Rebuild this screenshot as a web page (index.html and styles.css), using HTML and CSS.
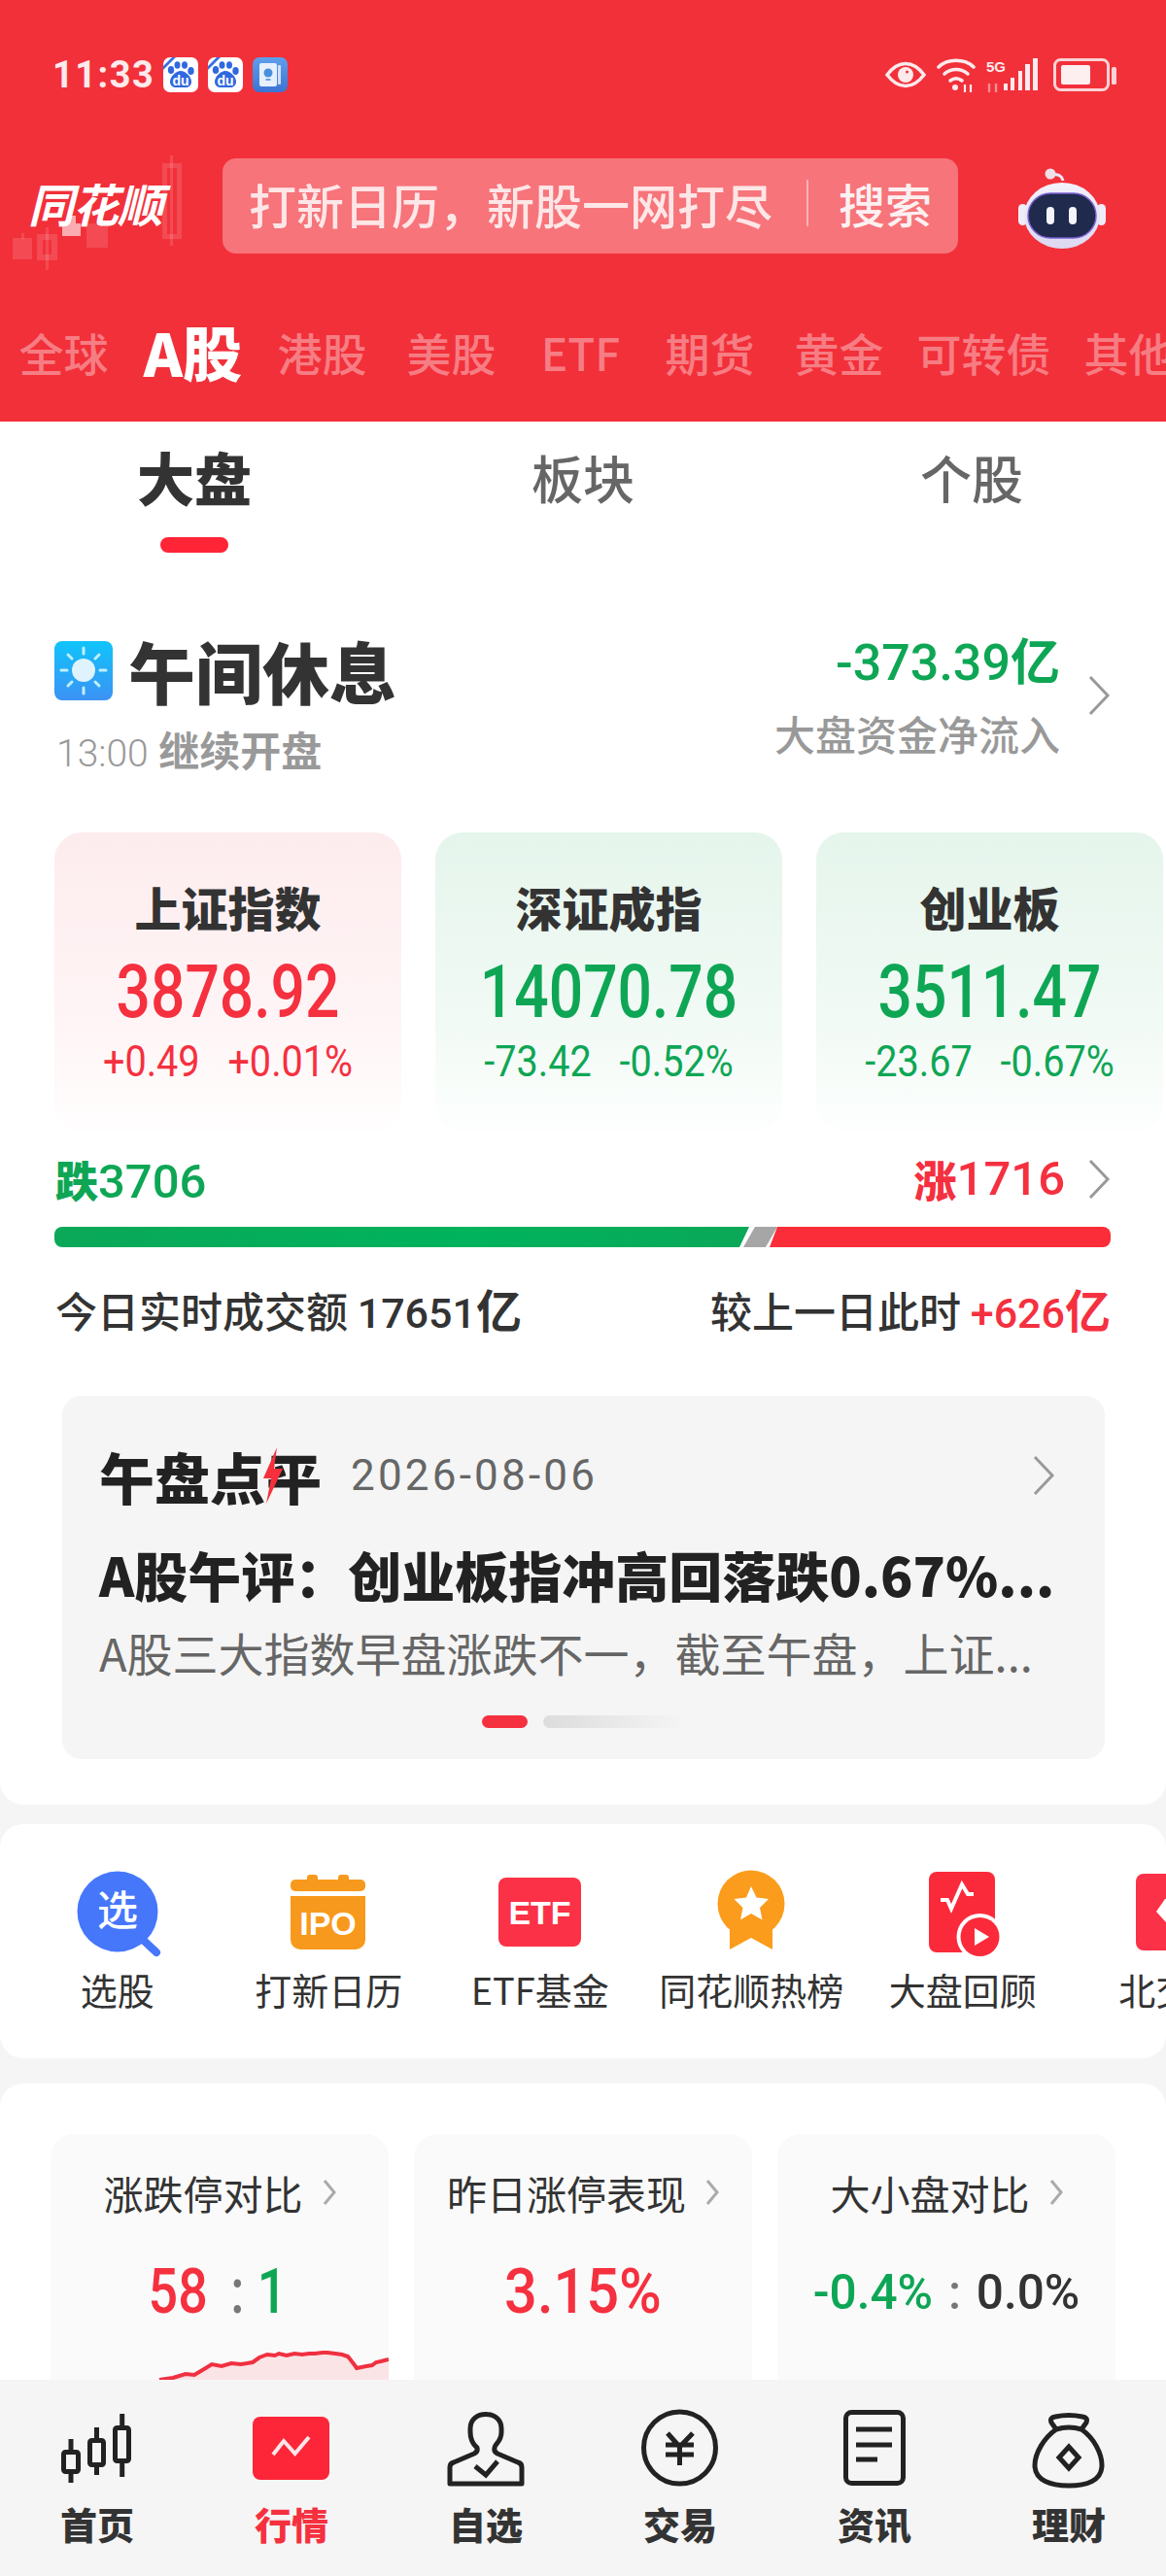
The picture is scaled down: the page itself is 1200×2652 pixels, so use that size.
FILE: index.html
```html
<!DOCTYPE html>
<html lang="zh-CN">
<head>
    <meta charset="UTF-8">
    <meta name="viewport" content="width=device-width, initial-scale=1.0">
    <title>行情</title>
    <link rel="stylesheet" href="styles.css">
</head>
<body>
<div class="app">
    <header class="top">
        <div class="status">
            <span class="clock">11:33</span>
            <svg class="app-ico" viewBox="0 0 36 36">
                <rect width="36" height="36" rx="7" fill="#fff"/>
                <path d="M0 9 9 0h4L0 13z" fill="#3a6fe0"/>
                <ellipse cx="8" cy="13" rx="3.2" ry="4" fill="#3068e0"/>
                <ellipse cx="14.5" cy="8" rx="3" ry="3.8" fill="#3068e0"/>
                <ellipse cx="22" cy="8" rx="3" ry="3.8" fill="#3068e0"/>
                <ellipse cx="28.5" cy="14" rx="3.2" ry="4" fill="#3068e0"/>
                <path d="M18 14c5 0 11 6 11 11 0 4-3 6-6 6H13c-3 0-6-2-6-6 0-5 6-11 11-11z" fill="#3068e0"/>
                <text x="18" y="29" text-anchor="middle" class="du">du</text>
            </svg>
            <svg class="app-ico" viewBox="0 0 36 36">
                <rect width="36" height="36" rx="7" fill="#fff"/>
                <path d="M0 9 9 0h4L0 13z" fill="#3a6fe0"/>
                <ellipse cx="8" cy="13" rx="3.2" ry="4" fill="#3068e0"/>
                <ellipse cx="14.5" cy="8" rx="3" ry="3.8" fill="#3068e0"/>
                <ellipse cx="22" cy="8" rx="3" ry="3.8" fill="#3068e0"/>
                <ellipse cx="28.5" cy="14" rx="3.2" ry="4" fill="#3068e0"/>
                <path d="M18 14c5 0 11 6 11 11 0 4-3 6-6 6H13c-3 0-6-2-6-6 0-5 6-11 11-11z" fill="#3068e0"/>
                <text x="18" y="29" text-anchor="middle" class="du">du</text>
            </svg>
            <svg class="app-ico" viewBox="0 0 36 36">
                <defs>
                    <linearGradient id="noteBg" x1="0" y1="0" x2="0" y2="1">
                        <stop offset="0" stop-color="#5f9fec"/>
                        <stop offset="1" stop-color="#3b73d3"/>
                    </linearGradient>
                </defs>
                <rect width="36" height="36" rx="7" fill="url(#noteBg)"/>
                <rect x="7" y="6" width="18" height="24" rx="2" fill="#e6f0fc"/>
                <rect x="26" y="8" width="3" height="20" rx="1" fill="#cfe0f7"/>
                <circle cx="16" cy="16" r="4.5" fill="#4a8fdc"/>
                <path d="M13.5 23h5" stroke="#4a8fdc" stroke-width="1.6"/>
            </svg>
            <div class="status-right">
                <svg width="42" height="28" viewBox="0 0 42 28" class="ico-eye">
                    <path d="M2 14C8 6 14 2.500 21 2.500S34 6 40 14c-6 8-12 11.500-19 11.500S8 22 2 14z" fill="none" stroke="#fdeaec" stroke-width="3.500"/>
                    <circle cx="21" cy="14" r="8" fill="#fdeaec"/>
                    <circle cx="22.500" cy="11" r="1.500" fill="#f2303a"/>
                </svg>
                <svg width="40" height="36" viewBox="0 0 40 36">
                    <g fill="none" stroke="#fdeaec" stroke-width="3.600" stroke-linecap="round">
                        <path d="M2 10C11 1 29 1 38 10"/>
                        <path d="M8 17c7-6 17-6 24 0"/>
                        <path d="M14 24c4-3 8-3 12 0"/>
                    </g>
                    <circle cx="19" cy="31" r="3" fill="#fdeaec"/>
                    <path d="M29 36v-8M35 28v8" stroke="#fdeaec" stroke-width="2.200"/>
                </svg>
                <svg width="56" height="36" viewBox="0 0 56 36" class="ico-signal">
                    <text x="1" y="15" class="five-g">5G</text>
                    <path d="M4 36v-9M11 27v9" stroke="#f98d92" stroke-width="2.400"/>
                    <rect x="19" y="27" width="4" height="7" fill="#fdeaec"/>
                    <rect x="26" y="21" width="4" height="13" fill="#fdeaec"/>
                    <rect x="34" y="14" width="4" height="20" fill="#fdeaec"/>
                    <rect x="41" y="7" width="5" height="27" fill="#fdeaec"/>
                    <rect x="49" y="1" width="5" height="33" fill="#fdeaec"/>
                </svg>
                <svg width="66" height="34" viewBox="0 0 66 34">
                    <rect x="1.500" y="1.500" width="55" height="31" rx="6" fill="none" stroke="#fbd3d6" stroke-width="3"/>
                    <rect x="8" y="7" width="30" height="20" rx="2" fill="#fdeef0"/>
                    <rect x="60" y="9" width="5" height="18" rx="1.500" fill="#fbd3d6"/>
                </svg>
            </div>
        </div>

        <div class="search-row">
            <div class="logo">
                <!-- faint candles behind the logo -->
                <svg class="logo-bg" width="190" height="125" viewBox="0 0 190 125">
                    <g fill="#fff" fill-opacity=".13">
                        <rect x="13" y="85" width="20" height="22"/>
                        <rect x="22" y="80" width="3" height="6"/>
                        <path d="M38 81h21v27H38zm6 6v15h9V87z" fill-rule="evenodd"/>
                        <rect x="47" y="74" width="3" height="44"/>
                        <path d="M64 70h19v13H64zm5-8h9v8h-9z" fill-opacity=".6"/>
                        <rect x="89" y="70" width="22" height="25"/>
                        <path d="M167 8h20v78h-20zm5 5v68h10V13z" fill-rule="evenodd"/>
                        <rect x="175" y="0" width="3" height="93"/>
                    </g>
                </svg>
                <span class="logo-text">同花顺</span>
            </div>
            <div class="search">
                <span class="search-hint">打新日历，新股一网打尽</span>
                <i class="search-line"></i>
                <span class="search-btn">搜索</span>
            </div>
            <svg class="robot" width="90" height="84" viewBox="0 0 90 84">
                <defs>
                    <linearGradient id="shell" x1="0" y1="0" x2="0" y2="1">
                        <stop offset="0" stop-color="#f3f1fb"/>
                        <stop offset="1" stop-color="#dcd8f2"/>
                    </linearGradient>
                </defs>
                <path d="M36 7c5-1 9 1 10 6" fill="none" stroke="#ece8f8" stroke-width="3"/>
                <circle cx="33" cy="6" r="5.500" fill="#f1dfe8"/>
                <rect x="0" y="37" width="9" height="22" rx="4.500" fill="#efecfa"/>
                <rect x="81" y="37" width="9" height="22" rx="4.500" fill="#efecfa"/>
                <ellipse cx="45" cy="49" rx="39" ry="34" fill="url(#shell)"/>
                <rect x="10" y="26" width="70" height="46" rx="23" fill="#1f2a4d" stroke="#7a5fd0" stroke-width="1.500"/>
                <rect x="29" y="40" width="8" height="18" rx="4" fill="#f4f4fb"/>
                <rect x="52" y="40" width="8" height="18" rx="4" fill="#f4f4fb"/>
            </svg>
        </div>

        <nav class="mkt-tabs">
            <span class="mkt">全球</span>
            <span class="mkt on">A股</span>
            <span class="mkt">港股</span>
            <span class="mkt">美股</span>
            <span class="mkt">ETF</span>
            <span class="mkt">期货</span>
            <span class="mkt">黄金</span>
            <span class="mkt wide">可转债</span>
            <span class="mkt">其他</span>
        </nav>
    </header>

    <main class="scroll">
        <section class="panel market">
            <div class="seg-tabs">
                <div class="seg on">大盘<i class="seg-mark"></i></div>
                <div class="seg">板块</div>
                <div class="seg">个股</div>
            </div>

            <div class="session">
                <div class="session-left">
                    <div class="session-title">
                        <svg class="sun" width="60" height="61" viewBox="0 0 60 61">
                            <defs>
                                <linearGradient id="sky" x1="0" y1="0" x2="0" y2="1">
                                    <stop offset="0" stop-color="#10c4fb"/>
                                    <stop offset="1" stop-color="#3c92f5"/>
                                </linearGradient>
                            </defs>
                            <rect width="60" height="61" rx="8" fill="url(#sky)"/>
                            <circle cx="30" cy="30" r="12" fill="#fff" fill-opacity=".85"/>
                            <g stroke="#bff0fb" stroke-width="3" stroke-linecap="round">
                                <path d="M30 7v6M30 48v6M7 30h6M47 30h6M14 14l4 4M42 42l4 4M46 14l-4 4M18 42l-4 4"/>
                            </g>
                        </svg>
                        <h1>午间休息</h1>
                    </div>
                    <div class="session-sub"><span class="latin">13:00</span> <b>继续开盘</b></div>
                </div>
                <div class="session-right">
                    <div class="flow green"><span class="latin">-373.39</span><b>亿</b></div>
                    <div class="flow-label">大盘资金净流入</div>
                </div>
                <svg class="chev" width="24" height="42" viewBox="0 0 24 42"><path d="M3 2l18 19L3 40"/></svg>
            </div>

            <div class="index-row">
                <div class="index-card up">
                    <div class="index-name">上证指数</div>
                    <div class="index-val red">3878.92</div>
                    <div class="index-chg red"><span>+0.49</span><span>+0.01%</span></div>
                </div>
                <div class="index-card down">
                    <div class="index-name">深证成指</div>
                    <div class="index-val green">14070.78</div>
                    <div class="index-chg green"><span>-73.42</span><span>-0.52%</span></div>
                </div>
                <div class="index-card down">
                    <div class="index-name">创业板</div>
                    <div class="index-val green">3511.47</div>
                    <div class="index-chg green"><span>-23.67</span><span>-0.67%</span></div>
                </div>
            </div>

            <div class="breadth">
                <div class="green"><b>跌</b><span class="latin">3706</span></div>
                <div class="breadth-right red">
                    <b>涨</b><span class="latin">1716</span>
                    <svg class="chev" width="24" height="42" viewBox="0 0 24 42"><path d="M3 2l18 19L3 40"/></svg>
                </div>
            </div>
            <div class="bar">
                <i class="bar-down"></i>
                <i class="bar-flat"></i>
                <i class="bar-up"></i>
            </div>
            <div class="volume">
                <div>今日实时成交额 <span class="latin">17651</span><b>亿</b></div>
                <div>较上一日此时 <span class="red"><span class="latin">+626</span><b>亿</b></span></div>
            </div>

            <div class="digest">
                <div class="digest-head">
                    <div class="digest-brand">午盘点<svg class="bolt" width="24" height="58" viewBox="0 0 24 58"><path d="M16 0 2 32h8L5 58 22 22h-9z" fill="#f5303c"/></svg>平</div>
                    <span class="digest-date">2026-08-06</span>
                    <svg class="chev" width="24" height="42" viewBox="0 0 24 42"><path d="M3 2l18 19L3 40"/></svg>
                </div>
                <div class="digest-title">A股午评：创业板指冲高回落跌0.67%...</div>
                <div class="digest-text">A股三大指数早盘涨跌不一，截至午盘，上证...</div>
                <div class="dots"><i class="dot-on"></i><i class="dot-rest"></i></div>
            </div>
        </section>

        <section class="panel shortcuts">
            <div class="tool">
                <svg class="tool-ico" width="100" height="90" viewBox="0 0 100 90">
                    <circle cx="50" cy="43" r="41.500" fill="#4677fb"/>
                    <path d="M74 70l16 15" stroke="#4677fb" stroke-width="8" stroke-linecap="round"/>
                    <text x="50" y="57" text-anchor="middle" class="tool-glyph">选</text>
                </svg>
                <span>选股</span>
            </div>
            <div class="tool">
                <svg class="tool-ico" width="100" height="90" viewBox="0 0 100 90">
                    <rect x="28" y="5" width="11" height="10" rx="3" fill="#f7991c"/>
                    <rect x="60" y="5" width="11" height="10" rx="3" fill="#f7991c"/>
                    <rect x="11" y="10" width="77" height="12" rx="5" fill="#f7991c"/>
                    <path d="M11 27h77v45a10 10 0 0 1-10 10H21a10 10 0 0 1-10-10z" fill="#f7991c"/>
                    <text x="49.500" y="67" text-anchor="middle" class="tool-tag">IPO</text>
                </svg>
                <span>打新日历</span>
            </div>
            <div class="tool">
                <svg class="tool-ico" width="100" height="90" viewBox="0 0 100 90">
                    <rect x="7" y="8" width="85" height="71" rx="8" fill="#fb3147"/>
                    <text x="49.500" y="56" text-anchor="middle" class="tool-tag">ETF</text>
                </svg>
                <span>ETF基金</span>
            </div>
            <div class="tool">
                <svg class="tool-ico" width="100" height="90" viewBox="0 0 100 90">
                    <path d="M28 55h44v27l-22-12-22 12z" fill="#fb9c1c"/>
                    <circle cx="50" cy="35" r="34.500" fill="#fb9c1c"/>
                    <path d="M50 17l5.500 11.500 12.500 1.500-9 9 2.500 12.500L50 45l-11 6.500L41.500 39l-9-9L45 28.500z" fill="#fff"/>
                </svg>
                <span>同花顺热榜</span>
            </div>
            <div class="tool">
                <svg class="tool-ico" width="100" height="90" viewBox="0 0 100 90">
                    <rect x="15" y="2" width="68" height="83" rx="8" fill="#fb2a3b"/>
                    <path d="M27 31h7l4 9 11-25 6 10h6" fill="none" stroke="#fff" stroke-width="4"/>
                    <circle cx="67.500" cy="69" r="24" fill="#fff"/>
                    <circle cx="67.500" cy="69" r="20" fill="#fb2a3b"/>
                    <path d="M62 60l15 9-15 9z" fill="#fff"/>
                </svg>
                <span>大盘回顾</span>
            </div>
            <div class="tool">
                <svg class="tool-ico" width="100" height="90" viewBox="0 0 100 90">
                    <rect x="11" y="4" width="78" height="79" rx="8" fill="#fb3147"/>
                    <path d="M32 43l9-13h18l9 13-18 20z" fill="#fff"/>
                </svg>
                <span>北交所</span>
            </div>
        </section>

        <section class="panel compare">
            <div class="cmp-card">
                <div class="cmp-title">涨跌停对比<svg class="chev-sm" width="14" height="26" viewBox="0 0 14 26"><path d="M2 1l10 12L2 25"/></svg></div>
                <div class="cmp-val ratio"><span class="red">58</span><em>:</em><span class="green">1</span></div>
                <svg class="spark" width="348" height="60" viewBox="0 0 348 60">
                    <path d="M112 45L126 43 139 39 148 40 158 34 166 29 176 31 186 28 196 29 208 27 215 22 223 19 231 20 235 18 243 20 251 18 259 19 266 18 272 18 280 17 285 17 293 18 300 19 306 21 310 26 313 30 315 33 325 31 331 30 335 27 340 26 348 24V60H112z" fill="#fbe4e6"/>
                    <path d="M112 45L126 43 139 39 148 40 158 34 166 29 176 31 186 28 196 29 208 27 215 22 223 19 231 20 235 18 243 20 251 18 259 19 266 18 272 18 280 17 285 17 293 18 300 19 306 21 310 26 313 30 315 33 325 31 331 30 335 27 340 26 348 24" fill="none" stroke="#f03040" stroke-width="4"/>
                </svg>
            </div>
            <div class="cmp-card">
                <div class="cmp-title">昨日涨停表现<svg class="chev-sm" width="14" height="26" viewBox="0 0 14 26"><path d="M2 1l10 12L2 25"/></svg></div>
                <div class="cmp-val rate red">3.15%</div>
                <div class="cmp-foot">盈亏利比</div>
            </div>
            <div class="cmp-card">
                <div class="cmp-title">大小盘对比<svg class="chev-sm" width="14" height="26" viewBox="0 0 14 26"><path d="M2 1l10 12L2 25"/></svg></div>
                <div class="cmp-val split"><span class="green">-0.4%</span><em>:</em><span>0.0%</span></div>
                <div class="cmp-foot">三日涨分布</div>
            </div>
        </section>
    </main>

    <nav class="tabbar">
        <div class="tab">
            <svg width="100" height="84" viewBox="0 0 100 84">
                <g class="line-ico">
                    <rect x="15.500" y="44.500" width="15" height="20" rx="2"/>
                    <path d="M23 31v11M23 67v9"/>
                    <rect x="42.500" y="32.500" width="14" height="25" rx="2"/>
                    <path d="M49.500 19v11M49.500 60v8"/>
                    <rect x="68.500" y="19.500" width="14" height="34" rx="2"/>
                    <path d="M75.700 5v12M75.700 56v14"/>
                </g>
            </svg>
            <span>首页</span>
        </div>
        <div class="tab on">
            <svg width="100" height="84" viewBox="0 0 100 84">
                <rect x="10" y="8" width="79" height="65" rx="8" fill="#fd2538"/>
                <path d="M31 47l11-14 11.600 13L68 29" fill="none" stroke="#fde6e8" stroke-width="4"/>
            </svg>
            <span>行情</span>
        </div>
        <div class="tab">
            <svg width="100" height="84" viewBox="0 0 100 84">
                <g class="line-ico">
                    <path d="M13 77V60q0-4 4-5l21-9q4-2 3-6-7-6-7-16v-4c0-9 7-14.500 16-14.500S66 11 66 20v4c0 10-7 12-7 16q-1 4 3 6l21 9q4 1 4 5v17z" stroke-linejoin="round"/>
                    <path d="M39 59L50 68 62 54"/>
                </g>
            </svg>
            <span>自选</span>
        </div>
        <div class="tab">
            <svg width="100" height="84" viewBox="0 0 100 84">
                <g class="line-ico">
                    <circle cx="49.500" cy="40" r="37"/>
                    <path d="M37 25l12.500 14L63 25M35 37h29M35 47h29M49.500 39v19"/>
                </g>
            </svg>
            <span>交易</span>
        </div>
        <div class="tab">
            <svg width="100" height="84" viewBox="0 0 100 84">
                <g class="line-ico">
                    <rect x="20.500" y="3.500" width="59" height="73" rx="6"/>
                    <path d="M31 21h37M31 37h37M31 52h22"/>
                </g>
            </svg>
            <span>资讯</span>
        </div>
        <div class="tab">
            <svg width="100" height="84" viewBox="0 0 100 84">
                <g class="line-ico">
                    <path d="M37 21l-5-7q-2-5 4-6 14-3 28 0 6 1 4 6l-5 7"/>
                    <path d="M37 21q13-4 26 0c13 9 21 25 21 37 0 16-16 21-34 21S15 74 15 58c0-12 9-28 22-37z"/>
                    <path d="M50 39l10 11-10 11-10-11z"/>
                </g>
            </svg>
            <span>理财</span>
        </div>
    </nav>
</div>
</body>
</html>
```

FILE: styles.css
```css
* {
    box-sizing: border-box;
}

body {
    margin: 0;
    background-color: #f5f5f5;
    font-family: "Noto Sans CJK SC", "Noto Sans", sans-serif;
    color: #333;
}

i, em {
    font-style: normal;
}

.app {
    width: 1200px;
    height: 2652px;
    display: flex;
    flex-direction: column;
    overflow: hidden;
}

.red { color: #f5303f; }
.green { color: #0ea655; }

.latin {
    font-family: Roboto, "Liberation Sans", sans-serif;
}

/* top red area */
.top {
    height: 434px;
    flex: none;
    background-color: #f2303a;
    overflow: hidden;
}

.status {
    display: flex;
    align-items: center;
    height: 38px;
    margin-top: 58px;
    padding: 0 50px 0 54px;
}

.clock {
    width: 114px;
    font-family: Roboto, "Liberation Sans", sans-serif;
    font-size: 38px;
    font-weight: 700;
    letter-spacing: 1.5px;
    color: #fdeaec;
}

.app-ico {
    width: 36px;
    height: 36px;
    margin-right: 10px;
}

.du {
    font-family: "Liberation Sans", sans-serif;
    font-size: 14px;
    font-weight: 700;
    fill: #fff;
}

.status-right {
    margin-left: auto;
    display: flex;
    align-items: center;
    gap: 11px;
}

.ico-signal {
    margin-left: -1px;
    margin-right: 3px;
}

.five-g {
    font-family: "Liberation Sans", sans-serif;
    font-size: 15px;
    font-weight: 700;
    fill: #fdeaec;
}

.search-row {
    display: flex;
    align-items: center;
    height: 98px;
    margin-top: 67px;
}

.logo {
    position: relative;
    width: 229px;
    height: 98px;
    flex: none;
    padding-left: 29px;
    line-height: 92px;
}

.logo-bg {
    position: absolute;
    left: 0;
    top: -3px;
}

.logo-text {
    position: relative;
    display: inline-block;
    font-size: 47px;
    font-weight: 700;
    font-style: italic;
    letter-spacing: -1px;
    color: #fff;
}

.search {
    width: 757px;
    height: 98px;
    display: flex;
    align-items: center;
    padding: 0 0 6px 27px;
    border-radius: 14px;
    background-color: rgba(255, 255, 255, 0.33);
}

.search-hint {
    width: 574px;
    font-size: 49px;
    font-weight: 500;
    color: rgba(255, 255, 255, 0.82);
}

.search-line {
    width: 2px;
    height: 48px;
    background-color: rgba(255, 255, 255, 0.45);
}

.search-btn {
    margin-left: 31px;
    font-size: 48px;
    font-weight: 500;
    color: #fdf0f1;
}

.robot {
    margin-left: 62px;
    margin-top: 5px;
}

.mkt-tabs {
    display: flex;
    align-items: center;
    height: 60px;
    margin-top: 71px;
    margin-left: -1px;
}

.mkt {
    flex: 0 0 133px;
    text-align: center;
    font-size: 46px;
    font-weight: 500;
    line-height: 60px;
    white-space: nowrap;
    color: rgba(255, 255, 255, 0.38);
}

.mkt.wide {
    flex-basis: 165px;
}

.mkt.on {
    font-size: 61px;
    font-weight: 900;
    color: #fff;
}

/* white cards */
.scroll {
    flex: 1;
    overflow: hidden;
}

.panel {
    background-color: #fff;
}

.market {
    height: 1424px;
    border-radius: 0 0 24px 24px;
    overflow: hidden;
}

.seg-tabs {
    display: grid;
    grid-template-columns: repeat(3, 400px);
    height: 136px;
    padding-top: 22px;
}

.seg {
    display: flex;
    flex-direction: column;
    align-items: center;
    font-size: 53px;
    font-weight: 500;
    line-height: 70px;
    color: #666;
}

.seg.on {
    font-size: 59px;
    font-weight: 900;
    color: #333;
}

.seg-mark {
    width: 70px;
    height: 16px;
    margin-top: 27px;
    border-radius: 8px;
    background-color: #ff2436;
}

.session {
    display: flex;
    height: 148px;
    margin-top: 82px;
    padding: 0 57px 0 56px;
}

.session-left {
    flex: 1;
}

.session-title {
    display: flex;
    align-items: center;
    height: 80px;
    margin-top: -2px;
}

.session-title h1 {
    margin: 0 0 0 16px;
    font-size: 69px;
    font-weight: 900;
    line-height: 80px;
    color: #333;
}

.session-sub {
    margin-top: 16px;
    line-height: 50px;
    font-size: 42px;
    color: #999;
    padding-left: 2px;
}

.session-sub .latin {
    font-size: 39px;
    font-weight: 300;
    margin-right: 1px;
}

.session-sub b {
    font-weight: 700;
}

.session-right {
    margin-top: -2px;
    margin-right: 28px;
    text-align: right;
}

.flow {
    height: 56px;
    font-size: 52px;
    line-height: 56px;
    font-weight: 500;
}

.flow b {
    font-size: 51px;
    font-weight: 700;
}

.flow-label {
    margin-top: 24px;
    font-size: 42px;
    line-height: 50px;
    font-weight: 500;
    color: #999;
}

.chev {
    flex: none;
    fill: none;
    stroke: #999;
    stroke-width: 3;
}

.session .chev {
    margin-top: 43px;
}

.index-row {
    display: grid;
    grid-template-columns: repeat(3, 357px);
    gap: 35px;
    margin-top: 57px;
    padding-left: 56px;
}

.index-card {
    height: 308px;
    padding-top: 46px;
    border-radius: 28px;
    text-align: center;
}

.index-card.up {
    background: linear-gradient(#fdecee, #fff5f6 65%, #fffefe);
}

.index-card.down {
    background: linear-gradient(#e5f5ec, #f2faf5 65%, #fdfffe);
}

.index-name {
    font-size: 48px;
    font-weight: 900;
    line-height: 60px;
}

/* digits here are drawn tall and condensed */
.index-val,
.index-chg,
.cmp-val {
    font-family: Roboto, "Liberation Sans", sans-serif;
    font-weight: 500;
}

.index-val {
    margin-top: 18px;
    font-size: 76px;
    line-height: 80px;
    transform: scaleX(0.82);
}

.index-chg {
    display: flex;
    justify-content: center;
    gap: 32px;
    margin-top: 7px;
    font-size: 44px;
    font-weight: 400;
    line-height: 50px;
    transform: scaleX(0.9);
}

.breadth {
    display: flex;
    justify-content: space-between;
    height: 50px;
    margin-top: 24px;
    padding: 0 57px;
    font-size: 44px;
    line-height: 50px;
}

.breadth b {
    font-weight: 900;
}

.breadth .latin {
    font-size: 49px;
    font-weight: 500;
}

.breadth-right {
    display: flex;
    align-items: center;
}

.breadth-right .chev {
    margin-left: 23px;
}

.bar {
    display: flex;
    height: 21px;
    margin: 24px 57px 0 56px;
}

.bar-down {
    width: 715px;
    border-radius: 8px 0 0 8px;
    background: linear-gradient(90deg, #0aa858, #00b35c 60%, #0aa858);
    clip-path: polygon(0 0, 100% 0, calc(100% - 10px) 100%, 0 100%);
}

.bar-flat {
    width: 35px;
    margin-left: -6px;
    background-color: #a6a6a6;
    clip-path: polygon(12px 0, 100% 0, 23px 100%, 0 100%);
}

.bar-up {
    flex: 1;
    margin-left: -8px;
    border-radius: 0 8px 8px 0;
    background-color: #fa2d38;
    clip-path: polygon(8px 0, 100% 0, 100% 100%, 0 100%);
}

.volume {
    display: flex;
    justify-content: space-between;
    height: 50px;
    margin-top: 38px;
    padding: 0 57px;
    font-size: 43px;
    font-weight: 500;
    line-height: 50px;
    white-space: nowrap;
}

.volume .latin {
    font-size: 43px;
}

.volume b {
    font-size: 47px;
    font-weight: 700;
}

.digest {
    height: 374px;
    margin: 65px 63px 0 64px;
    padding: 47px 0 0 38px;
    border-radius: 20px;
    background-color: #f5f5f5;
}

.digest-head {
    display: flex;
    align-items: center;
    height: 70px;
    padding-right: 51px;
}

.digest-brand {
    display: flex;
    align-items: center;
    font-size: 57px;
    font-weight: 900;
    line-height: 70px;
    color: #222;
}

/* the bolt sits on top of the last character's left edge */
.bolt {
    position: relative;
    z-index: 1;
    margin-left: -4px;
    margin-right: -19px;
}

.digest-date {
    margin-left: 30px;
    font-family: Roboto, "Liberation Sans", sans-serif;
    font-size: 44px;
    letter-spacing: 3.2px;
    color: #666;
}

.digest-head .chev {
    margin-left: auto;
}

.digest-title {
    margin-top: 31px;
    font-size: 55px;
    font-weight: 900;
    line-height: 70px;
    white-space: nowrap;
    color: #222;
}

.digest-text {
    margin-top: 16px;
    font-size: 47px;
    line-height: 60px;
    white-space: nowrap;
    color: #666;
}

.dots {
    display: flex;
    gap: 16px;
    margin-top: 35px;
    padding-left: 394px;
}

.dot-on {
    width: 47px;
    height: 13px;
    border-radius: 7px;
    background-color: #f5303f;
}

.dot-rest {
    width: 146px;
    height: 13px;
    border-radius: 7px;
    background: linear-gradient(90deg, #dcdcdc, rgba(220, 220, 220, 0));
}

.shortcuts {
    display: flex;
    height: 241px;
    margin-top: 20px;
    padding: 47px 0 0 12px;
    border-radius: 24px;
    overflow: hidden;
}

.tool {
    flex: 0 0 217.500px;
    display: flex;
    flex-direction: column;
    align-items: center;
    font-size: 38px;
    line-height: 50px;
    white-space: nowrap;
}

.tool-ico {
    display: block;
    margin-bottom: 8px;
    flex: none;
}

.tool-glyph {
    font-family: "Noto Sans CJK SC", sans-serif;
    font-size: 42px;
    font-weight: 500;
    fill: #fff;
}

.tool-tag {
    font-family: "Liberation Sans", sans-serif;
    font-size: 34px;
    font-weight: 700;
    fill: #fff;
}

.compare {
    display: grid;
    grid-template-columns: repeat(3, 348px);
    gap: 26px;
    height: 400px;
    margin-top: 26px;
    padding: 52px 0 0 52px;
    border-radius: 24px 24px 0 0;
}

.cmp-card {
    height: 340px;
    border-radius: 24px 24px 0 0;
    background-color: #fafafa;
    padding-top: 32px;
    text-align: center;
    overflow: hidden;
}

.cmp-title {
    display: flex;
    justify-content: center;
    align-items: center;
    gap: 20px;
    font-size: 41px;
    line-height: 56px;
    white-space: nowrap;
}

.chev-sm {
    fill: none;
    stroke: #aaa;
    stroke-width: 3;
}

.cmp-val {
    height: 80px;
    margin-top: 35px;
    line-height: 80px;
}

.cmp-val em {
    color: #777;
}

.cmp-val.ratio {
    font-size: 64px;
    transform: scaleX(0.84);
    margin-left: -4px;
}

.cmp-val.ratio em {
    margin: 0 16px 0 28px;
}

.cmp-val.rate {
    font-size: 64px;
    transform: scaleX(0.93);
}

.cmp-val.split {
    font-size: 50px;
    transform: scaleX(0.99);
}

.cmp-val.split em {
    margin: 0 16px;
}

.spark {
    display: block;
    margin-top: 5px;
}

.cmp-foot {
    margin-top: 43px;
    font-size: 36px;
    line-height: 44px;
    color: #666;
}

/* bottom tab bar */
.tabbar {
    flex: none;
    height: 202px;
    display: grid;
    grid-template-columns: repeat(6, 200px);
    padding-top: 30px;
    background-color: #f5f5f5;
}

.tab {
    display: flex;
    flex-direction: column;
    align-items: center;
    font-size: 38px;
    font-weight: 900;
    line-height: 44px;
    color: #333;
}

.tab.on {
    color: #f5303f;
}

.tab svg {
    display: block;
    margin-bottom: 12px;
}

.line-ico {
    fill: none;
    stroke: #222;
    stroke-width: 5;
}
```
